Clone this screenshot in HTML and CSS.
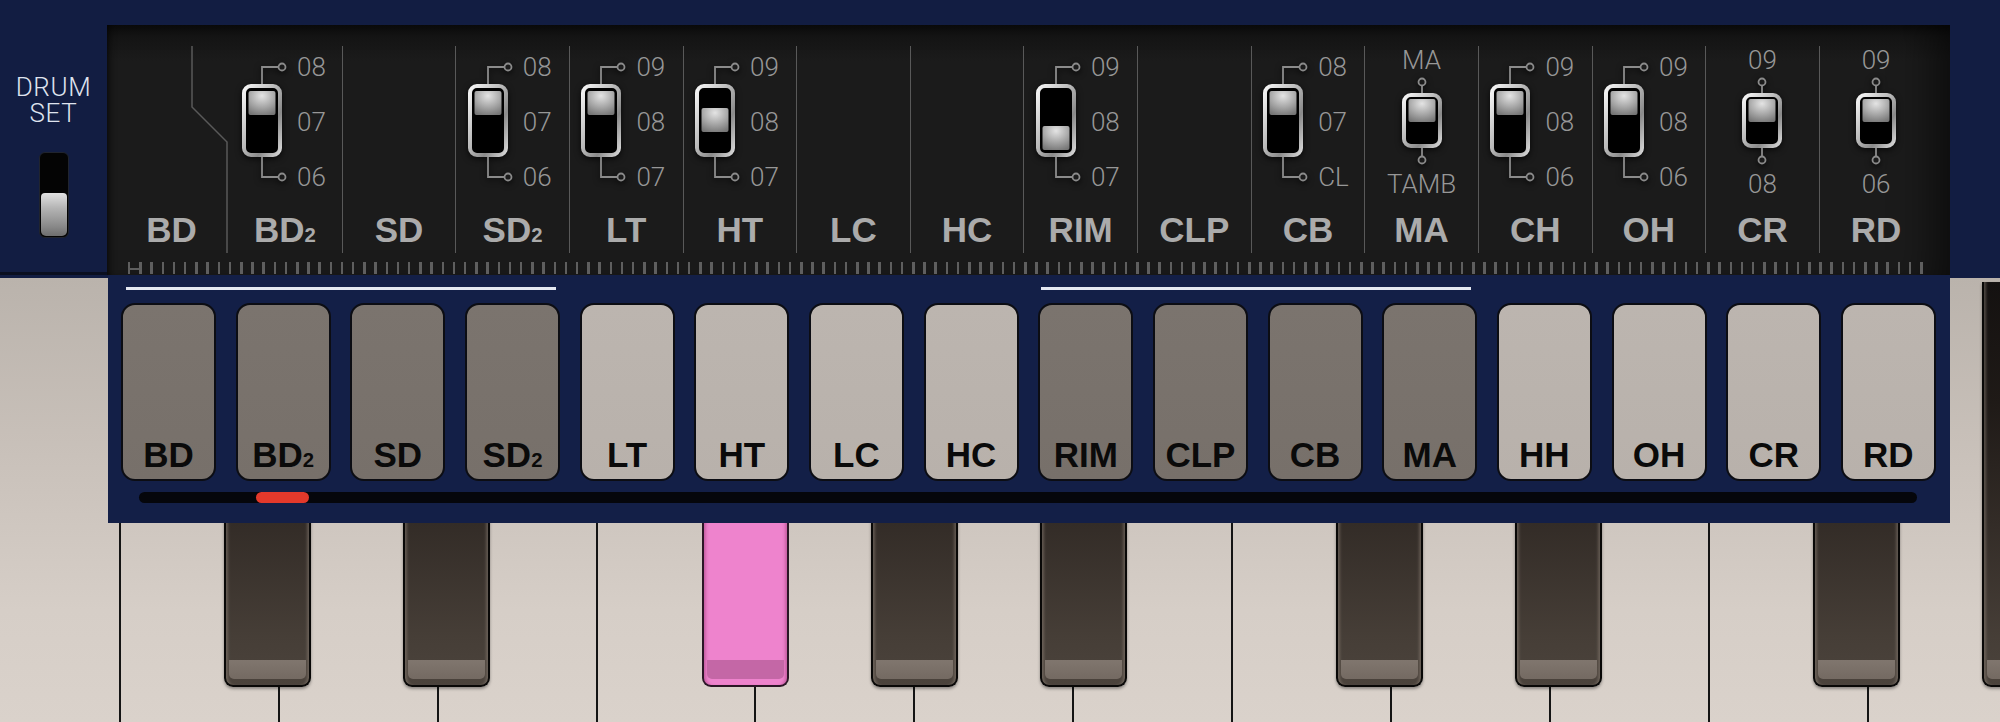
FILE: index.html
```html
<!DOCTYPE html>
<html>
<head>
<meta charset="utf-8">
<title>Drum Set</title>
<link rel="stylesheet" href="styles.css">
</head>
<body>
<svg class="defs" width="0" height="0" aria-hidden="true">
  <defs>
    <linearGradient id="ringGrad" x1="0" y1="0" x2="1" y2="1">
      <stop offset="0" stop-color="#f6f6f6"/>
      <stop offset=".45" stop-color="#b8b8b8"/>
      <stop offset=".7" stop-color="#8a8a8a"/>
      <stop offset="1" stop-color="#d8d8d8"/>
    </linearGradient>
    <radialGradient id="knobGrad" cx=".5" cy=".2" r=".85">
      <stop offset="0" stop-color="#e4e4e4"/>
      <stop offset=".55" stop-color="#a8a8a8"/>
      <stop offset="1" stop-color="#767676"/>
    </radialGradient>
  </defs>
</svg>

<div class="app">
  <aside class="side">
    <div class="side-title"><span class="st-line">DRUM</span><span class="st-line">SET</span></div>
    <div class="side-switch"><div class="side-knob"></div></div>
  </aside>

  <section class="panel">
    <div class="cols">
      <div class="col col-bd">
        <svg class="bend" width="113" height="207" viewBox="0 0 113 207"><path d="M77 0V61L112 96V207"/></svg>
        <div class="cname">BD</div>
      </div>

      <div class="col col-nodiv">
        <div class="sw3wrap">
          <svg class="sw" width="46" height="130" viewBox="0 0 46 130">
            <path class="wire" d="M20 26V9H36.5M20 99V119H36.5"/>
            <circle class="node" cx="40" cy="9" r="3.5"/><circle class="node" cx="40" cy="119" r="3.5"/>
            <rect x="2" y="28" width="36" height="69" rx="7" fill="#000" stroke="url(#ringGrad)" stroke-width="4"/>
            <rect x="6.5" y="33" width="27" height="24" rx="2" fill="url(#knobGrad)"/>
          </svg>
          <div class="vals"><span>08</span><span>07</span><span>06</span></div>
        </div>
        <div class="cname">BD<span class="sub">2</span></div>
      </div>

      <div class="col"><div class="cname">SD</div></div>

      <div class="col">
        <div class="sw3wrap">
          <svg class="sw" width="46" height="130" viewBox="0 0 46 130">
            <path class="wire" d="M20 26V9H36.5M20 99V119H36.5"/>
            <circle class="node" cx="40" cy="9" r="3.5"/><circle class="node" cx="40" cy="119" r="3.5"/>
            <rect x="2" y="28" width="36" height="69" rx="7" fill="#000" stroke="url(#ringGrad)" stroke-width="4"/>
            <rect x="6.5" y="33" width="27" height="24" rx="2" fill="url(#knobGrad)"/>
          </svg>
          <div class="vals"><span>08</span><span>07</span><span>06</span></div>
        </div>
        <div class="cname">SD<span class="sub">2</span></div>
      </div>

      <div class="col">
        <div class="sw3wrap">
          <svg class="sw" width="46" height="130" viewBox="0 0 46 130">
            <path class="wire" d="M20 26V9H36.5M20 99V119H36.5"/>
            <circle class="node" cx="40" cy="9" r="3.5"/><circle class="node" cx="40" cy="119" r="3.5"/>
            <rect x="2" y="28" width="36" height="69" rx="7" fill="#000" stroke="url(#ringGrad)" stroke-width="4"/>
            <rect x="6.5" y="33" width="27" height="24" rx="2" fill="url(#knobGrad)"/>
          </svg>
          <div class="vals"><span>09</span><span>08</span><span>07</span></div>
        </div>
        <div class="cname">LT</div>
      </div>

      <div class="col">
        <div class="sw3wrap">
          <svg class="sw" width="46" height="130" viewBox="0 0 46 130">
            <path class="wire" d="M20 26V9H36.5M20 99V119H36.5"/>
            <circle class="node" cx="40" cy="9" r="3.5"/><circle class="node" cx="40" cy="119" r="3.5"/>
            <rect x="2" y="28" width="36" height="69" rx="7" fill="#000" stroke="url(#ringGrad)" stroke-width="4"/>
            <rect x="6.5" y="50" width="27" height="24" rx="2" fill="url(#knobGrad)"/>
          </svg>
          <div class="vals"><span>09</span><span>08</span><span>07</span></div>
        </div>
        <div class="cname">HT</div>
      </div>

      <div class="col"><div class="cname">LC</div></div>
      <div class="col"><div class="cname">HC</div></div>

      <div class="col">
        <div class="sw3wrap">
          <svg class="sw" width="46" height="130" viewBox="0 0 46 130">
            <path class="wire" d="M20 26V9H36.5M20 99V119H36.5"/>
            <circle class="node" cx="40" cy="9" r="3.5"/><circle class="node" cx="40" cy="119" r="3.5"/>
            <rect x="2" y="28" width="36" height="69" rx="7" fill="#000" stroke="url(#ringGrad)" stroke-width="4"/>
            <rect x="6.5" y="68" width="27" height="24" rx="2" fill="url(#knobGrad)"/>
          </svg>
          <div class="vals"><span>09</span><span>08</span><span>07</span></div>
        </div>
        <div class="cname">RIM</div>
      </div>

      <div class="col"><div class="cname">CLP</div></div>

      <div class="col">
        <div class="sw3wrap">
          <svg class="sw" width="46" height="130" viewBox="0 0 46 130">
            <path class="wire" d="M20 26V9H36.5M20 99V119H36.5"/>
            <circle class="node" cx="40" cy="9" r="3.5"/><circle class="node" cx="40" cy="119" r="3.5"/>
            <rect x="2" y="28" width="36" height="69" rx="7" fill="#000" stroke="url(#ringGrad)" stroke-width="4"/>
            <rect x="6.5" y="33" width="27" height="24" rx="2" fill="url(#knobGrad)"/>
          </svg>
          <div class="vals"><span>08</span><span>07</span><span>CL</span></div>
        </div>
        <div class="cname">CB</div>
      </div>

      <div class="col">
        <div class="sw2wrap">
          <span class="v2">MA</span>
          <svg class="sw" width="44" height="104" viewBox="0 0 44 104">
            <path class="wire" d="M22 15.5V23M22 78V86.5"/>
            <circle class="node" cx="22" cy="12" r="3.5"/><circle class="node" cx="22" cy="90" r="3.5"/>
            <rect x="4" y="25" width="36" height="51" rx="7" fill="#000" stroke="url(#ringGrad)" stroke-width="4"/>
            <rect x="8.5" y="29" width="27" height="23" rx="2" fill="url(#knobGrad)"/>
          </svg>
          <span class="v2">TAMB</span>
        </div>
        <div class="cname">MA</div>
      </div>

      <div class="col">
        <div class="sw3wrap">
          <svg class="sw" width="46" height="130" viewBox="0 0 46 130">
            <path class="wire" d="M20 26V9H36.5M20 99V119H36.5"/>
            <circle class="node" cx="40" cy="9" r="3.5"/><circle class="node" cx="40" cy="119" r="3.5"/>
            <rect x="2" y="28" width="36" height="69" rx="7" fill="#000" stroke="url(#ringGrad)" stroke-width="4"/>
            <rect x="6.5" y="33" width="27" height="24" rx="2" fill="url(#knobGrad)"/>
          </svg>
          <div class="vals"><span>09</span><span>08</span><span>06</span></div>
        </div>
        <div class="cname">CH</div>
      </div>

      <div class="col">
        <div class="sw3wrap">
          <svg class="sw" width="46" height="130" viewBox="0 0 46 130">
            <path class="wire" d="M20 26V9H36.5M20 99V119H36.5"/>
            <circle class="node" cx="40" cy="9" r="3.5"/><circle class="node" cx="40" cy="119" r="3.5"/>
            <rect x="2" y="28" width="36" height="69" rx="7" fill="#000" stroke="url(#ringGrad)" stroke-width="4"/>
            <rect x="6.5" y="33" width="27" height="24" rx="2" fill="url(#knobGrad)"/>
          </svg>
          <div class="vals"><span>09</span><span>08</span><span>06</span></div>
        </div>
        <div class="cname">OH</div>
      </div>

      <div class="col">
        <div class="sw2wrap">
          <span class="v2">09</span>
          <svg class="sw" width="44" height="104" viewBox="0 0 44 104">
            <path class="wire" d="M22 15.5V23M22 78V86.5"/>
            <circle class="node" cx="22" cy="12" r="3.5"/><circle class="node" cx="22" cy="90" r="3.5"/>
            <rect x="4" y="25" width="36" height="51" rx="7" fill="#000" stroke="url(#ringGrad)" stroke-width="4"/>
            <rect x="8.5" y="29" width="27" height="23" rx="2" fill="url(#knobGrad)"/>
          </svg>
          <span class="v2">08</span>
        </div>
        <div class="cname">CR</div>
      </div>

      <div class="col">
        <div class="sw2wrap">
          <span class="v2">09</span>
          <svg class="sw" width="44" height="104" viewBox="0 0 44 104">
            <path class="wire" d="M22 15.5V23M22 78V86.5"/>
            <circle class="node" cx="22" cy="12" r="3.5"/><circle class="node" cx="22" cy="90" r="3.5"/>
            <rect x="4" y="25" width="36" height="51" rx="7" fill="#000" stroke="url(#ringGrad)" stroke-width="4"/>
            <rect x="8.5" y="29" width="27" height="23" rx="2" fill="url(#knobGrad)"/>
          </svg>
          <span class="v2">06</span>
        </div>
        <div class="cname">RD</div>
      </div>
    </div>
    <div class="ruler"><span class="ruler-start"></span></div>
  </section>

  <section class="deck">
    <div class="guides"><span class="guide"></span><span class="guide"></span></div>
    <div class="pads">
      <div class="pad dark"><span class="lbl">BD</span></div>
      <div class="pad dark"><span class="lbl">BD<span class="sub">2</span></span></div>
      <div class="pad dark"><span class="lbl">SD</span></div>
      <div class="pad dark"><span class="lbl">SD<span class="sub">2</span></span></div>
      <div class="pad light"><span class="lbl">LT</span></div>
      <div class="pad light"><span class="lbl">HT</span></div>
      <div class="pad light"><span class="lbl">LC</span></div>
      <div class="pad light"><span class="lbl">HC</span></div>
      <div class="pad dark"><span class="lbl">RIM</span></div>
      <div class="pad dark"><span class="lbl">CLP</span></div>
      <div class="pad dark"><span class="lbl">CB</span></div>
      <div class="pad dark"><span class="lbl">MA</span></div>
      <div class="pad light"><span class="lbl">HH</span></div>
      <div class="pad light"><span class="lbl">OH</span></div>
      <div class="pad light"><span class="lbl">CR</span></div>
      <div class="pad light"><span class="lbl">RD</span></div>
    </div>
    <div class="track"><span class="thumb"></span></div>
  </section>

  <div class="keyboard">
    <div class="wk first"></div>
    <div class="wk"></div><div class="wk"></div><div class="wk"></div>
    <div class="wk"></div><div class="wk"></div><div class="wk"></div>
    <div class="wk"></div><div class="wk"></div><div class="wk"></div>
    <div class="wk"></div><div class="wk"></div><div class="wk"></div>
    <div class="bk k1"></div>
    <div class="bk k2"></div>
    <div class="bk k3 pink"></div>
    <div class="bk k4"></div>
    <div class="bk k5"></div>
    <div class="bk k6"></div>
    <div class="bk k7"></div>
    <div class="bk k8"></div>
    <div class="bk k9"></div>
  </div>
</div>
</body>
</html>
```

FILE: styles.css
```css
* { box-sizing: border-box; }
html, body { margin: 0; padding: 0; }
body { background: #121d42; width: 2000px; height: 722px; overflow: hidden; }
.defs { position: absolute; width: 0; height: 0; }

.app {
  width: 2000px;
  height: 722px;
  display: grid;
  grid-template-columns: 107px 1843px 50px;
  grid-template-rows: 25px 250px 248px 199px;
  background: #121d42;
  overflow: hidden;
}

/* left DRUM SET block */
.side {
  grid-area: 1 / 1 / 3 / 2;
  display: flex;
  flex-direction: column;
  align-items: center;
  padding-top: 75px;
  background: #121d42;
  box-shadow: inset 0 -3px 0 #0a0f20;
}
.side-title {
  display: flex;
  flex-direction: column;
  align-items: center;
  gap: 2px;
  font: 300 26px/24px Roboto, "Liberation Sans", sans-serif;
  color: #dfe3ee;
  letter-spacing: 0.6px;
}
.st-line { display: block; height: 24px; }
.side-switch {
  margin-top: 27px;
  width: 30px;
  height: 86px;
  background: #040404;
  border: 1px solid #20242e;
  border-radius: 6px;
  display: flex;
  flex-direction: column;
  justify-content: flex-end;
  padding: 1px;
}
.side-knob {
  height: 43px;
  border-radius: 4px 4px 5px 5px;
  background: linear-gradient(180deg, #e2e2e2 0%, #b4b4b4 35%, #8c8c8c 75%, #6e6e6e 100%);
}

/* black switch panel */
.panel {
  grid-area: 2 / 2 / 3 / 3;
  position: relative;
  z-index: 2;
  background: linear-gradient(180deg, #0b0b0b 0px, #151515 12px, #1b1b1b 36px, #1b1b1b 100%);
  box-shadow: inset 6px 0 10px -6px #000, inset -40px 0 40px -24px rgba(0,0,0,.55);
  padding: 21px 0 0 8px;
}
.cols {
  display: grid;
  grid-template-columns: 113px repeat(15, 113.64px);
  height: 207px;
}
.col {
  display: flex;
  flex-direction: column;
  border-left: 1.5px solid #595959;
  min-width: 0;
}
.col-bd, .col-nodiv { border-left: none; }
.col-bd { display: grid; }
.col-bd > * { grid-area: 1 / 1; }
.bend { display: block; }
.bend path { fill: none; stroke: #595959; stroke-width: 1.5; }
.col-bd .cname { align-self: end; }

.cname {
  margin-top: auto;
  text-align: center;
  font: bold 35px/35px "Liberation Sans", Arial, sans-serif;
  color: #ababab;
  padding-bottom: 6px;
  white-space: nowrap;
}
.sub { font-size: 0.58em; line-height: 0; vertical-align: baseline; }

.sw3wrap {
  display: flex;
  gap: 9px;
  margin: 12px 0 0 11.5px;
}
.col-nodiv .sw3wrap { margin-left: 14px; }
.sw { display: block; filter: drop-shadow(0 2px 3px rgba(0,0,0,.7)); }
.wire { fill: none; stroke: #8b8b8b; stroke-width: 1.8; }
.node { fill: #1b1b1b; stroke: #8b8b8b; stroke-width: 1.8; }
.vals {
  display: flex;
  flex-direction: column;
  justify-content: space-between;
  height: 128px;
  font: 300 26px/18px Roboto, "Liberation Sans", sans-serif;
  color: #979797;
}
.sw2wrap {
  display: flex;
  flex-direction: column;
  align-items: center;
  margin-top: 4px;
  font: 300 26px/20px Roboto, "Liberation Sans", sans-serif;
  color: #979797;
}
.v2 { display: block; height: 20px; }

.ruler {
  margin: 9px 0 0 13px;
  width: 1798px;
  height: 12px;
  background: repeating-linear-gradient(90deg, #5f5f5f 0 2.5px, transparent 2.5px 11.2px);
  display: flex;
  align-items: flex-end;
}
.ruler-start {
  display: block;
  width: 12px;
  height: 2px;
  margin-bottom: 4px;
  background: #5f5f5f;
}

/* navy pad deck */
.deck {
  grid-area: 3 / 2 / 4 / 3;
  z-index: 2;
  background: #131f47;
  margin-left: 1px;
}
.guides {
  display: flex;
  gap: 485px;
  padding-left: 18px;
  margin-top: 12px;
}
.guide {
  display: block;
  width: 430px;
  height: 2.5px;
  background: #e4e8f1;
}
.pads {
  display: grid;
  grid-template-columns: repeat(16, 95px);
  column-gap: 19.67px;
  margin: 13.5px 0 0 13px;
  height: 178px;
}
.pad {
  border: 2px solid #0c0d13;
  border-radius: 14px;
  display: flex;
  align-items: flex-end;
  justify-content: center;
  padding-bottom: 7px;
  font: bold 35px/35px "Liberation Sans", Arial, sans-serif;
  color: #0a0a0a;
  white-space: nowrap;
}
.lbl { display: block; }
.pad.dark { background: linear-gradient(180deg, #7b746e, #77706a); }
.pad.light { background: linear-gradient(180deg, #bcb5af, #b8b1ab); }

.track {
  margin: 11px 0 0 31px;
  width: 1778px;
  height: 11px;
  border-radius: 6px;
  background: #05060b;
}
.thumb {
  display: block;
  margin-left: 117px;
  width: 53px;
  height: 11px;
  border-radius: 6px;
  background: #e3392b;
}

/* keyboard */
.keyboard {
  grid-area: 3 / 1 / 5 / 4;
  z-index: 0;
  margin-top: 3px;
  position: relative;
  overflow: hidden;
  display: flex;
  background: #cfc7c0;
}
.wk {
  flex: 0 0 158.9px;
  border-right: 2px solid #141414;
  background: linear-gradient(180deg, #bab3ac 0%, #c9c1ba 40%, #d6cec7 75%, #dad2cb 100%);
}
.wk.first { margin-left: -38px; }

.bk {
  position: absolute;
  top: 4px;
  width: 87px;
  height: 405px;
  border: 2px solid #090807;
  border-top: none;
  border-radius: 0 0 9px 9px;
  background: linear-gradient(180deg, #141110 0%, #1f1a17 30%, #332c27 60%, #463e37 88%, #4b433c 100%);
  box-shadow: inset 4px 0 3px -2px rgba(150,140,128,.45), inset -4px 0 3px -2px rgba(150,140,128,.45), 0 2px 3px rgba(0,0,0,.35);
}
.bk::after {
  content: "";
  position: absolute;
  left: 3px;
  right: 3px;
  bottom: 6px;
  height: 19px;
  border-radius: 0 0 5px 5px;
  background: linear-gradient(180deg, #80766e, #746a62);
}
.bk.pink {
  background: #ee83cd;
  border-color: #2b1626;
  box-shadow: inset 4px 0 3px -2px rgba(150,50,110,.45), inset -4px 0 3px -2px rgba(150,50,110,.45);
}
.bk.pink::after { background: #c467a6; }

.k1 { left: 224px; }
.k2 { left: 403px; }
.k3 { left: 702px; }
.k4 { left: 871px; }
.k5 { left: 1040px; }
.k6 { left: 1336px; }
.k7 { left: 1515px; }
.k8 { left: 1813px; }
.k9 { left: 1982px; }
```
